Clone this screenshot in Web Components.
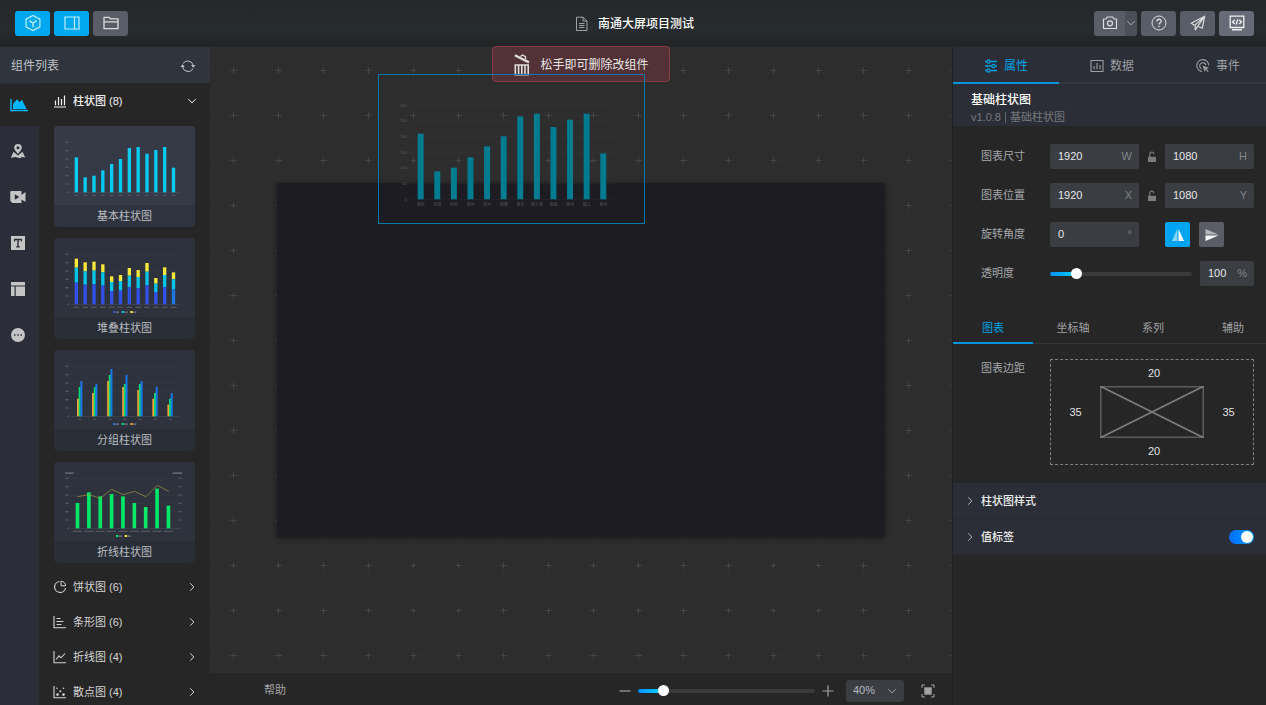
<!DOCTYPE html>
<html lang="zh-CN">
<head>
<meta charset="utf-8">
<title>南通大屏项目测试</title>
<style>
  body { margin: 0; background: #262626; color: #c4c7cc; font: 11px/16px "Liberation Sans", "Noto Sans CJK SC", sans-serif; }
</style>
</head>
<body>
<screen-editor></screen-editor>
<script>
const RESET = `
  *, *::before { box-sizing: border-box; }
  button, input, select { font: inherit; color: inherit; margin: 0; padding: 0; border: 0; background: none; outline: none; }
  button { cursor: pointer; }
  svg { display: block; }
`;

function define(name, css, html, setup) {
  const tpl = document.createElement('template');
  tpl.innerHTML = `<style>${RESET}${css}</style>${html}`;
  customElements.define(name, class extends HTMLElement {
    constructor() {
      super();
      this.attachShadow({ mode: 'open' });
    }
    connectedCallback() {
      if (this.shadowRoot.childNodes.length) return;
      this.shadowRoot.append(tpl.content.cloneNode(true));
      if (setup) setup(this, this.shadowRoot);
    }
  });
}

/* name: [width, height, markup]; strokes take the current colour */
const ICONS = {
  cube: [18, 18, '<path d="M9 1.5 15.9 5.2V12.8L9 16.5 2.1 12.8V5.2Z" stroke-width="1.2"/><path d="M5.5 6.6 9 9.2 12.5 6.6M9 9.2V13.2" stroke-width="1.4"/>'],
  columns: [18, 18, '<path d="M2 3H16V15H2ZM11.5 3V15" stroke-width="1.2"/>'],
  folder: [18, 18, '<path d="M2 14.7V3.3H7L8.5 4.8H16V14.7ZM2.3 7.8H15.5" stroke-width="1.3"/>'],
  page: [14, 16, '<path d="M1.5 1.2H8L12 5V14.5H1.5ZM8 1.2V5H12M4 7.5H9.5M4 9.5H9.5M4 11.5H9.5"/>'],
  camera: [18, 18, '<path d="M2.5 5H5L6.3 3H11.7L13 5H15.5V14.5H2.5Z" stroke-linejoin="round" stroke-width="1.2"/><circle cx="9" cy="9.3" r="2.5" stroke-width="1.3"/>'],
  help: [18, 18, '<circle cx="9" cy="9" r="7"/><path d="M6.9 7.4C6.9 4.5 11.1 4.6 11.1 7.2 11.1 8.8 9 8.7 9 10.6M9 11.8V13.2" stroke-width="1.3"/>'],
  plane: [18, 18, '<path d="M15.7 2.2 2.2 9.3 5.8 11.4 15.7 2.2 13.3 14.2 8.8 12.2 6.2 15.8V11.4M8.8 12.2 15.7 2.2" stroke-linejoin="round" stroke-width="1.2"/>'],
  code: [18, 18, '<path d="M2.2 2.2H15.8V13.5H2.2Z" stroke-width="1.3"/><path d="M6.8 5.7 4.5 7.9 6.8 10.1M11.2 5.7 13.5 7.9 11.2 10.1M9.8 5.3 8.2 10.5M4 15.8H14" stroke-width="1.4"/>'],
  refresh: [16, 16, '<path d="M3 5.5A5.6 5.6 0 0 1 13.2 7.5M13 10.5A5.6 5.6 0 0 1 2.5 8.5"/><path d="M11 7H15.4L13.2 9.8ZM.4 9H4.8L2.6 6.2Z" fill="currentColor" stroke="none"/>'],
  down: [10, 10, '<path d="M1.3 3.2 5 6.8 8.7 3.2"/>'],
  right: [10, 10, '<path d="M3.2 1.3 6.8 5 3.2 8.7"/>'],
  bars: [14, 14, '<path d="M1 13H13M2.5 6.5V11.3M5.5 3V11.3M8.5 5V11.3M11.5 1.5V11.3" stroke-width="1.2"/>'],
  pie: [14, 14, '<path d="M6.5 1.5A5.5 5.5 0 1 0 12.5 8" stroke-width="1.2"/><path d="M8 1.2V5.8H12.6A4.6 4.6 0 0 0 8 1.2Z"/>'],
  hbars: [14, 14, '<path d="M1 1V12.8H13M3.5 3.5H7.5M3.5 6.5H10.5M3.5 9.5H8.5" stroke-width="1.1"/>'],
  line: [14, 14, '<path d="M1 1V12.8H13M3 9.5 6 5.8 8 7.8 12 3.5" stroke-width="1.1"/>'],
  scatter: [14, 14, '<path d="M1 1V12.8H13" stroke-width="1.1"/><g fill="currentColor" stroke="none"><circle cx="4" cy="3.2" r=".8"/><circle cx="10.5" cy="3.2" r=".8"/><circle cx="7.3" cy="6.3" r="1"/><circle cx="4.5" cy="9.6" r="1.3"/><circle cx="10.5" cy="9.6" r="1.3"/></g>'],
  area: [18, 14, '<path d="M1 1V12.5H18" stroke-width="1.5"/><path d="M3 11V6L7 1.3 9.6 4.2 12 1.7 16.5 11Z" fill="currentColor" stroke="none"/>'],
  map: [16, 16, '<g fill="currentColor" stroke="none"><path fill-rule="evenodd" d="M8 1A3.8 3.8 0 0 1 11.8 4.8C11.8 7 9.5 9 8 11 6.5 9 4.2 7 4.2 4.8A3.8 3.8 0 0 1 8 1ZM8 3.3A1.5 1.5 0 1 0 8 6.3 1.5 1.5 0 1 0 8 3.3Z"/><path d="M3.5 8.8 8 12.4 12.5 8.8 15.2 14.5 12 13.9 10 15.2 5.5 13.9 .8 14.7Z"/></g>'],
  video: [16, 16, '<path fill-rule="evenodd" d="M1 2H11.5V6L15.5 3V13L11.5 10.5V14H2.5L.3 12V2.5ZM4.8 5.3V10.7L9.4 8Z" fill="currentColor" stroke="none"/>'],
  text: [16, 16, '<path fill-rule="evenodd" d="M1 1H15V15H1ZM4 3.8V6.4H5.2V5.2H7.3V11.2H6.2V12.4H9.8V11.2H8.7V5.2H10.8V6.4H12V3.8Z" fill="currentColor" stroke="none"/>'],
  layout: [16, 16, '<path d="M1 1H15V4.5H1ZM1 5.5H4.5V15H1ZM5.7 5.5H15V15H5.7Z" fill="currentColor" stroke="none"/>'],
  more: [16, 16, '<path fill-rule="evenodd" d="M8 1A7 7 0 1 1 8 15 7 7 0 1 1 8 1ZM4 7.2V8.8H5.5V7.2ZM7.3 7.2V8.8H8.8V7.2ZM10.5 7.2V8.8H12V7.2Z" fill="currentColor" stroke="none"/>'],
  trash: [18, 24, '<path d="M2.3 12H15.2V21.7H2.3ZM5.6 12V21.5M8.8 12V21.5M12 12V21.5" stroke-width="1.6"/><path d="M1.8 2.2 16 9.4" stroke-width="2.4"/><path d="M7.5 3.6 9.5 2 12.5 3.6V6" stroke-width="1.3"/>'],
  sliders: [14, 14, '<path d="M1 2.5H2.8M6.2 2.5H13M1 7H7.8M11.2 7H13M1 11.5H2.8M6.2 11.5H13" stroke-width="1.3"/><g stroke-width="1.2"><circle cx="4.5" cy="2.5" r="1.6"/><circle cx="9.5" cy="7" r="1.6"/><circle cx="4.5" cy="11.5" r="1.6"/></g>'],
  data: [14, 14, '<path d="M1 1.5H13V12.5H1ZM4 7V10.3M7 4V10.3M10 6V10.3" stroke-width="1.1"/>'],
  event: [14, 14, '<path d="M6 12.6A6 6 0 1 1 12.8 6.5M5.5 9.8A3.2 3.2 0 1 1 10 6.2" stroke-width="1.1"/><path d="M6.5 6.5 13 8.8 10.6 9.9 12.8 12.2 11.8 13 9.8 10.8 8.7 13Z" fill="currentColor" stroke="none"/>'],
  unlock: [10, 12, '<path d="M2.8 6V3.2A2 2 0 0 1 6.8 3.2" stroke-width="1.2"/><path d="M1 5.8H9V11H1Z" fill="currentColor" stroke="none"/>'],
  fliph: [14, 14, '<path d="M6.3 1V13H1Z" fill="currentColor" stroke="none" opacity=".55"/><path d="M7.5 1V13H13Z" fill="currentColor" stroke="none"/>'],
  flipv: [14, 14, '<path d="M.5 6.5H13.5L.5 1Z" fill="currentColor" stroke="none" opacity=".55"/><path d="M.5 7.5H13.5L.5 13Z" fill="currentColor" stroke="none"/>'],
  minus: [12, 12, '<path d="M.5 6H11.5" stroke-width="1.2"/>'],
  plus: [12, 12, '<path d="M.5 6H11.5M6 .5V11.5" stroke-width="1.2"/>'],
  fit: [14, 14, '<path d="M1 4V1H4M10 1H13V4M13 10V13H10M4 13H1V10"/><path d="M3.3 3.3H10.7V10.7H3.3Z" fill="currentColor" stroke="none"/>']
};

define('ui-icon', ':host { display: block; flex: none; }', '', (el, root) => {
  const [w, h, body] = ICONS[el.getAttribute('name')];
  root.innerHTML += `<svg width="${w}" height="${h}" viewBox="0 0 ${w} ${h}" fill="none" stroke="currentColor" aria-hidden="true">${body}</svg>`;
});

/* ---------- header ---------- */
define('tool-button', `
  :host { display: block; }
  button { display: flex; align-items: center; justify-content: center; width: 35px; height: 25px; border-radius: 3px; background: #585d67; color: #dcdcdc; }
  :host([active]) button { background: #00a8f0; color: #c2eeff; }
  :host([bright]) button { background: #666b77; color: #f0f0f0; }
  :host([split]) button { width: 31px; border-radius: 3px 0 0 3px; }
  :host([menu]) button { width: 12px; border-radius: 0 3px 3px 0; background: #4b4f58; color: #a8abb0; }
`, '<button type="button"><slot></slot></button>', (el, root) => {
  root.querySelector('button').setAttribute('aria-label', el.getAttribute('label'));
});

define('app-header', `
  :host { display: block; }
  header { display: grid; grid-template-columns: 1fr auto 1fr; align-items: center; height: 47px; padding: 0 12px 0 15px; background: linear-gradient(#24272a, #272c2f 60%, #212425); border-bottom: 1px solid #26262a; }
  .group { display: flex; gap: 4px; }
  .group.end { justify-content: flex-end; }
  .split { display: flex; }
  h1 { display: flex; align-items: center; gap: 9px; margin: 0; padding-top: 2px; font-size: 12px; font-weight: 500; color: #fff; }
  h1 ui-icon { color: #a2a2a4; }
`, `<header>
  <div class="group">
    <tool-button active label="组件"><ui-icon name="cube"></ui-icon></tool-button>
    <tool-button active label="面板"><ui-icon name="columns"></ui-icon></tool-button>
    <tool-button label="文件"><ui-icon name="folder"></ui-icon></tool-button>
  </div>
  <h1><ui-icon name="page"></ui-icon>南通大屏项目测试</h1>
  <div class="group end">
    <div class="split">
      <tool-button split label="截图"><ui-icon name="camera"></ui-icon></tool-button>
      <tool-button menu label="更多"><ui-icon name="down"></ui-icon></tool-button>
    </div>
    <tool-button label="问题"><ui-icon name="help"></ui-icon></tool-button>
    <tool-button label="发布"><ui-icon name="plane"></ui-icon></tool-button>
    <tool-button bright label="代码"><ui-icon name="code"></ui-icon></tool-button>
  </div>
</header>`);

/* ---------- thumbnails, drawn on a 423 x 237 field ---------- */
const rect = (x, y, w, h, fill) => `<rect x="${x}" y="${y}" width="${w}" height="${h}" fill="${fill}"/>`;

function axes(count, first, step, w, right) {
  let s = '';
  for (let i = 0; i < 7; i++) {
    const y = 49 + i * 25;
    s += rect(50, y, 327, 1.5, i === 6 ? '#4b505b' : '#353a45');
    s += rect(i === 6 ? 40 : 34, y - 2, i === 6 ? 5 : 10, 4, '#4f545f');
    if (right) s += rect(374, y - 2, i === 6 ? 4 : 9, 4, '#4f545f');
  }
  for (let i = 0; i < count; i++) s += rect(first + i * step - w / 2, 206, w, 4, '#50555f');
  return s;
}
const legend = (colors, x) => colors.map((c, i) => rect(x + i * 26, 219, 7, 6, c) + rect(x + 8 + i * 26, 220, 10, 5, '#666b75')).join('');

const THUMBS = {
  basic() {
    const tops = [94, 154, 149, 133, 114, 99, 66, 63, 83, 72, 63, 125];
    return axes(12, 67, 26.5, 12) + tops.map((t, i) => rect(62 + i * 26.5, t, 10, 199 - t, '#03cbf3')).join('');
  },
  stack() {
    const a = [62, 73, 71, 79, 115, 111, 90, 96, 75, 120, 88, 103];
    const b = [89, 100, 98, 103, 132, 129, 113, 117, 101, 137, 111, 124];
    const c = [134, 140, 139, 143, 159, 158, 148, 151, 141, 162, 147, 154];
    return axes(12, 67, 26.5, 18) + a.map((t, i) => {
      const x = 62 + i * 26.5;
      return rect(x, t, 10, b[i] - t, '#fbe83c') + rect(x, b[i], 10, c[i] - b[i], '#00c4e8') + rect(x, c[i], 10, 199 - c[i], i === 11 ? '#1e78e4' : '#3050e8');
    }).join('') + legend(['#3050e8', '#00c4e8', '#fbe83c'], 177);
  },
  group() {
    const sets = [['#f3a034', [146, 129, 93, 111, 120, 146, 164]], ['#04da72', [111, 111, 75, 102, 102, 129, 146]], ['#1877e6', [93, 102, 57, 75, 93, 111, 129]]];
    return axes(7, 77, 45.3, 9) + sets.map(([c, tops], k) => tops.map((t, i) => rect(69 + k * 5 + i * 45.2, t, 6, 199 - t, c)).join('')).join('') + legend(['#1877e6', '#04da72', '#f3a034'], 177);
  },
  combo() {
    const tops = [123, 91, 103, 96, 103, 123, 135, 80, 131];
    const pts = [104, 98, 109, 82, 98, 88, 104, 70, 88];
    return axes(9, 70, 34.2, 28, true) + rect(33, 31, 26, 5, '#63676f') + rect(356, 31, 28, 5, '#63676f')
      + tops.map((t, i) => rect(65 + i * 34.1, t, 11, 199 - t, '#03e767')).join('')
      + `<polyline points="${pts.map((y, i) => `${70.5 + i * 34.2},${y}`).join(' ')}" fill="none" stroke="#a39b3d" stroke-width="2"/>`
      + legend(['#03e767', '#fbe83c'], 186);
  }
};

define('chart-card', `
  :host { display: block; }
  button { display: block; width: 100%; border-radius: 4px; overflow: hidden; background: #292d36; text-align: center; color: #bbbdc0; }
  svg { width: 100%; height: auto; background: #2e323d; }
  :host([hot]) button { background: #2f333f; }
  :host([hot]) svg { background: #363a47; }
  span { display: block; height: 22px; line-height: 22px; }
`, '<button type="button"><svg viewBox="0 0 423 237"></svg><span><slot></slot></span></button>', (el, root) => {
  root.querySelector('svg').innerHTML = THUMBS[el.getAttribute('kind')]();
});

define('group-head', `
  :host { display: block; }
  button { display: flex; align-items: center; gap: 6px; width: 100%; height: 35px; padding: 0 13px 0 14px; text-align: left; color: #d4d4d4; }
  span { flex: 1; }
  :host([open]) button { color: #f0f0f0; font-weight: 500; }
`, '<button type="button"><slot name="icon"></slot><span><slot></slot></span><slot name="arrow"></slot></button>');

/* ---------- left side ---------- */
define('component-panel', `
  :host { display: grid; grid-template-rows: 36px minmax(0, 1fr); min-height: 0; }
  .title { display: flex; align-items: center; justify-content: space-between; padding: 1px 14px 0 11px; background: #30343c; color: #bfc1c6; }
  h2 { margin: 0; font-size: 12px; font-weight: 400; }
  .body { display: grid; grid-template-columns: 39px minmax(0, 1fr); min-height: 0; }
  nav { display: flex; flex-direction: column; gap: 4px; padding-top: 1px; background: #2b2e38; }
  nav button { display: flex; align-items: center; justify-content: center; height: 42px; padding-right: 3px; color: #c4c4c4; }
  nav button.on { background: #262626; color: #00b7fa; padding-right: 2px; }
  .list { overflow: hidden; background: #262626; }
  .cards { display: grid; gap: 11px; padding: 8px 15px 6px; }
`, `<div class="title"><h2>组件列表</h2><button type="button" aria-label="刷新"><ui-icon name="refresh"></ui-icon></button></div>
<div class="body">
  <nav>
    <button type="button" class="on" aria-label="图表"><ui-icon name="area"></ui-icon></button>
    <button type="button" aria-label="地图"><ui-icon name="map"></ui-icon></button>
    <button type="button" aria-label="视频"><ui-icon name="video"></ui-icon></button>
    <button type="button" aria-label="文字"><ui-icon name="text"></ui-icon></button>
    <button type="button" aria-label="布局"><ui-icon name="layout"></ui-icon></button>
    <button type="button" aria-label="其他"><ui-icon name="more"></ui-icon></button>
  </nav>
  <div class="list">
    <group-head open><ui-icon slot="icon" name="bars"></ui-icon>柱状图 (8)<ui-icon slot="arrow" name="down"></ui-icon></group-head>
    <div class="cards">
      <chart-card kind="basic" hot>基本柱状图</chart-card>
      <chart-card kind="stack">堆叠柱状图</chart-card>
      <chart-card kind="group">分组柱状图</chart-card>
      <chart-card kind="combo">折线柱状图</chart-card>
    </div>
    <group-head><ui-icon slot="icon" name="pie"></ui-icon>饼状图 (6)<ui-icon slot="arrow" name="right"></ui-icon></group-head>
    <group-head><ui-icon slot="icon" name="hbars"></ui-icon>条形图 (6)<ui-icon slot="arrow" name="right"></ui-icon></group-head>
    <group-head><ui-icon slot="icon" name="line"></ui-icon>折线图 (4)<ui-icon slot="arrow" name="right"></ui-icon></group-head>
    <group-head><ui-icon slot="icon" name="scatter"></ui-icon>散点图 (4)<ui-icon slot="arrow" name="right"></ui-icon></group-head>
  </div>
</div>`);

/* ---------- shared controls ---------- */
define('range-slider', `
  :host { display: block; }
  input { appearance: none; display: block; width: 100%; height: 12px; }
  input::-webkit-slider-runnable-track { height: 4px; border-radius: 2px; background: linear-gradient(90deg, #0090ff, #00c8f8) 0 0 / var(--fill) 100% no-repeat #3a3a3b; }
  input::-webkit-slider-thumb { appearance: none; width: 11px; height: 11px; margin-top: -4px; border-radius: 50%; background: #fff; }
`, '<input type="range" min="0" max="100">', (el, root) => {
  const input = root.querySelector('input');
  const paint = () => input.style.setProperty('--fill', input.value + '%');
  input.value = el.getAttribute('value');
  input.setAttribute('aria-label', el.getAttribute('label'));
  input.addEventListener('input', paint);
  paint();
});

define('unit-field', `
  :host { display: block; min-width: 0; }
  label { display: flex; align-items: center; height: 25px; padding: 0 7px 2px 8px; border-radius: 2px; background: #3a3d42; }
  input { flex: 1; min-width: 0; width: 0; height: 16px; color: #e6e6e6; }
  span { color: #82858a; }
`, '<label><input type="text"><span></span></label>', (el, root) => {
  const input = root.querySelector('input');
  input.value = el.getAttribute('value');
  input.setAttribute('aria-label', el.getAttribute('label'));
  root.querySelector('span').textContent = el.getAttribute('unit');
});

define('toggle-switch', `
  :host { display: block; }
  input { appearance: none; display: block; position: relative; width: 25px; height: 14px; border-radius: 7px; background: #4b4f58; }
  input::before { content: ""; position: absolute; top: 1px; left: 1px; width: 12px; height: 12px; border-radius: 50%; background: #fff; }
  input:checked { background: linear-gradient(90deg, #006cff, #00a2ff); }
  input:checked::before { left: 12px; }
`, '<input type="checkbox" checked>', (el, root) => {
  root.querySelector('input').setAttribute('aria-label', el.getAttribute('label'));
});

/* ---------- stage ---------- */
define('drag-chart', `
  :host { display: block; width: 267px; height: 150px; border: 1px solid #0878a8; }
  svg { width: 100%; height: 100%; }
  text { font-size: 12px; fill: #5a5b5e; }
`, '<svg viewBox="3 3 795 444"></svg>', (el, root) => {
  const tops = [179, 292, 281, 250, 217, 187, 127, 119, 159, 137, 119, 238];
  const names = ['南京', '无锡', '徐州', '常州', '苏州', '南通', '淮安', '连云港', '盐城', '扬州', '镇江', '泰州'];
  let s = '';
  for (let i = 0; i < 7; i++) {
    const y = 93 + i * 47;
    s += rect(95, y, 615, 2, '#ffffff0a') + `<text x="86" y="${y + 5}" text-anchor="end">${300 - i * 50}</text>`;
  }
  tops.forEach((t, i) => {
    const x = 128 + i * 49.8;
    s += rect(x - 9, t, 18, 376 - t, '#007b90') + `<text x="${x}" y="396" text-anchor="middle">${names[i]}</text>`;
  });
  root.querySelector('svg').innerHTML = s;
});

define('stage-canvas', `
  :host { display: grid; place-items: center; position: relative; min-height: 0; background: #2d2d2e; }
  .grid { position: absolute; inset: 0; width: 100%; height: 100%; }
  .board { position: relative; width: 82%; aspect-ratio: 609 / 354; background: #1c1c22; box-shadow: 0 1px 5px #0007; }
  .hint { position: absolute; inset: -1px 0 auto 0; display: flex; justify-content: center; }
  .hint p { display: flex; align-items: center; gap: 9px; height: 36px; margin: 0; padding: 2px 20px 0; border: 1px solid #8a3b42; border-radius: 4px; background: #523137; color: #e8e6e6; font-size: 12px; }
  .hint ui-icon { color: #dcdcdc; }
  drag-chart { position: absolute; left: 168px; top: 27px; }
`, `<svg class="grid" aria-hidden="true">
  <defs><pattern id="cross" x="1" y="1" width="45" height="45" patternUnits="userSpaceOnUse">
    <path d="M22.5 1V45M1 22.5H45" stroke="#343435" stroke-dasharray="1 4" fill="none"/>
    <path d="M22.5 19.5V25.5M19.5 22.5H25.5" stroke="#454548" fill="none"/>
  </pattern></defs>
  <rect width="100%" height="100%" fill="url(#cross)"/>
</svg>
<div class="board"></div>
<div class="hint"><p><ui-icon name="trash"></ui-icon>松手即可删除改组件</p></div>
<drag-chart></drag-chart>`);

define('zoom-footer', `
  :host { display: block; }
  footer { display: flex; align-items: center; height: 32px; padding: 4px 17px 0 54px; background: #262626; color: #a2a2a4; }
  a { color: inherit; text-decoration: none; margin-right: auto; padding-bottom: 2px; }
  range-slider { width: 177px; margin: 0 7px; }
  .pick { display: grid; align-items: center; margin: 0 17px 0 12px; }
  .pick > * { grid-area: 1 / 1; }
  .pick ui-icon { justify-self: end; margin-right: 7px; pointer-events: none; }
  select { appearance: none; width: 58px; height: 22px; padding: 0 0 2px 7px; border-radius: 3px; background: #3a3d42; color: #b4b8c0; }
`, `<footer>
  <a href="#help">帮助</a>
  <button type="button" aria-label="缩小"><ui-icon name="minus"></ui-icon></button>
  <range-slider value="12" label="缩放"></range-slider>
  <button type="button" aria-label="放大"><ui-icon name="plus"></ui-icon></button>
  <div class="pick"><select aria-label="缩放比例"><option>40%</option><option>100%</option></select><ui-icon name="down"></ui-icon></div>
  <button type="button" aria-label="适应屏幕"><ui-icon name="fit"></ui-icon></button>
</footer>`);

/* ---------- right side ---------- */
define('fold-row', `
  :host { display: flex; align-items: center; height: 36px; padding: 0 12px; background: #2b2e36; border-bottom: 1px solid #26282c; }
  button { display: flex; align-items: center; gap: 6px; flex: 1; text-align: left; color: #eceded; font-weight: 500; }
  ui-icon { color: #b4b4b8; }
`, '<button type="button"><ui-icon name="right"></ui-icon><span><slot></slot></span></button><slot name="end"></slot>');

define('margin-box', `
  :host { display: grid; grid-template-columns: 49px 1fr 49px; grid-template-rows: 26px 1fr 26px; align-items: center; justify-items: center; height: 106px; border: 1px dashed #7e7e80; color: #e0e0e0; }
  input { width: 30px; height: 16px; text-align: center; color: inherit; }
  .top, .bottom { grid-column: 2; padding-left: 4px; }
  .left, svg, .right { grid-row: 2; }
  svg { width: 100%; height: 100%; }
`, `<input class="top" value="20" aria-label="上边距">
<input class="left" value="35" aria-label="左边距">
<svg viewBox="0 0 104 52" preserveAspectRatio="none" fill="none" stroke="#5c5c5e"><rect x=".75" y=".75" width="102.5" height="50.5" stroke-width="1.5"/><path d="M0 0 104 52M0 52 104 0" stroke="#7e7e80" stroke-width="1.6"/></svg>
<input class="right" value="35" aria-label="右边距">
<input class="bottom" value="20" aria-label="下边距">`);

define('props-panel', `
  :host { display: block; min-width: 0; overflow: hidden; background: #262626; border-left: 1px solid #202022; }
  .tabs { display: flex; overflow: hidden; }
  .tabs button { flex: none; display: flex; align-items: center; justify-content: center; border-bottom: 2px solid; }
  .main { background: #2b2e36; font-size: 12px; }
  .main button { width: 106px; height: 37px; gap: 6px; padding-top: 2px; color: #9c9ea2; border-color: #33363e; }
  .sub { margin-top: 27px; }
  .sub button { width: 80px; height: 31px; color: #a0a0a2; border-bottom: 1px solid #363638; }
  .tabs button.on { color: #00a2e4; border-bottom: 2px solid #0094de; }
  .intro { height: 42px; padding: 8px 18px 0; background: #2b2e36; color: #77797e; }
  h2 { margin: 0; color: #fff; font-size: 12px; line-height: 16px; font-weight: 500; }
  .intro p { display: flex; align-items: center; gap: 4px; margin: 1px 0 0; }
  .intro i { width: 1px; height: 11px; background: #63656a; }
  .form { display: grid; gap: 14px; padding: 18px 12px 0 28px; }
  .row { display: grid; grid-template-columns: 69px minmax(0, 1fr); align-items: center; color: #a4a6ab; }
  .form .row > span { padding-bottom: 2px; }
  .pair { display: grid; grid-template-columns: 1fr 26px 1fr; align-items: center; }
  .lock { justify-self: center; color: #7c7c7e; }
  .flips { display: flex; gap: 9px; grid-column: 3; }
  .flips button { display: flex; align-items: center; justify-content: center; width: 25px; height: 25px; border-radius: 2px; background: #5a5d66; color: #fff; }
  .flips .on { background: #00a4f0; }
  .opacity { display: grid; grid-template-columns: 1fr 54px; gap: 8px; align-items: center; }
  .margins { padding: 15px 12px 18px 28px; }
  .margins .row { align-items: start; }
  .margins .row > span { padding-top: 1px; }
`, `<div class="tabs main" role="tablist">
  <button type="button" role="tab" class="on"><ui-icon name="sliders"></ui-icon>属性</button>
  <button type="button" role="tab"><ui-icon name="data"></ui-icon>数据</button>
  <button type="button" role="tab"><ui-icon name="event"></ui-icon>事件</button>
</div>
<div class="intro"><h2>基础柱状图</h2><p>v1.0.8<i></i>基础柱状图</p></div>
<div class="form">
  <div class="row"><span>图表尺寸</span><div class="pair">
    <unit-field value="1920" unit="W" label="图表宽度"></unit-field>
    <button type="button" class="lock" aria-label="锁定比例"><ui-icon name="unlock"></ui-icon></button>
    <unit-field value="1080" unit="H" label="图表高度"></unit-field></div></div>
  <div class="row"><span>图表位置</span><div class="pair">
    <unit-field value="1920" unit="X" label="横向位置"></unit-field>
    <button type="button" class="lock" aria-label="锁定位置"><ui-icon name="unlock"></ui-icon></button>
    <unit-field value="1080" unit="Y" label="纵向位置"></unit-field></div></div>
  <div class="row"><span>旋转角度</span><div class="pair">
    <unit-field value="0" unit="°" label="旋转角度"></unit-field>
    <div class="flips">
      <button type="button" class="on" aria-label="水平翻转"><ui-icon name="fliph"></ui-icon></button>
      <button type="button" aria-label="垂直翻转"><ui-icon name="flipv"></ui-icon></button>
    </div></div></div>
  <div class="row"><span>透明度</span><div class="opacity">
    <range-slider value="16" label="透明度"></range-slider>
    <unit-field value="100" unit="%" label="透明度数值"></unit-field></div></div>
</div>
<div class="tabs sub" role="tablist">
  <button type="button" role="tab" class="on">图表</button>
  <button type="button" role="tab">坐标轴</button>
  <button type="button" role="tab">系列</button>
  <button type="button" role="tab">辅助</button>
</div>
<div class="margins"><div class="row"><span>图表边距</span><margin-box></margin-box></div></div>
<fold-row>柱状图样式</fold-row>
<fold-row>值标签<toggle-switch slot="end" label="值标签"></toggle-switch></fold-row>`);

define('screen-editor', `
  :host { display: grid; grid-template-rows: auto minmax(0, 1fr); height: 100vh; overflow: hidden; }
  main { display: grid; grid-template-columns: 210px minmax(0, 1fr) 314px; min-height: 0; }
  .center { display: grid; grid-template-rows: minmax(0, 1fr) auto; min-width: 0; min-height: 0; }
  stage-canvas { z-index: 1; }
`, `<app-header></app-header>
<main>
  <component-panel></component-panel>
  <div class="center"><stage-canvas></stage-canvas><zoom-footer></zoom-footer></div>
  <props-panel></props-panel>
</main>`);
</script>
</body>
</html>
